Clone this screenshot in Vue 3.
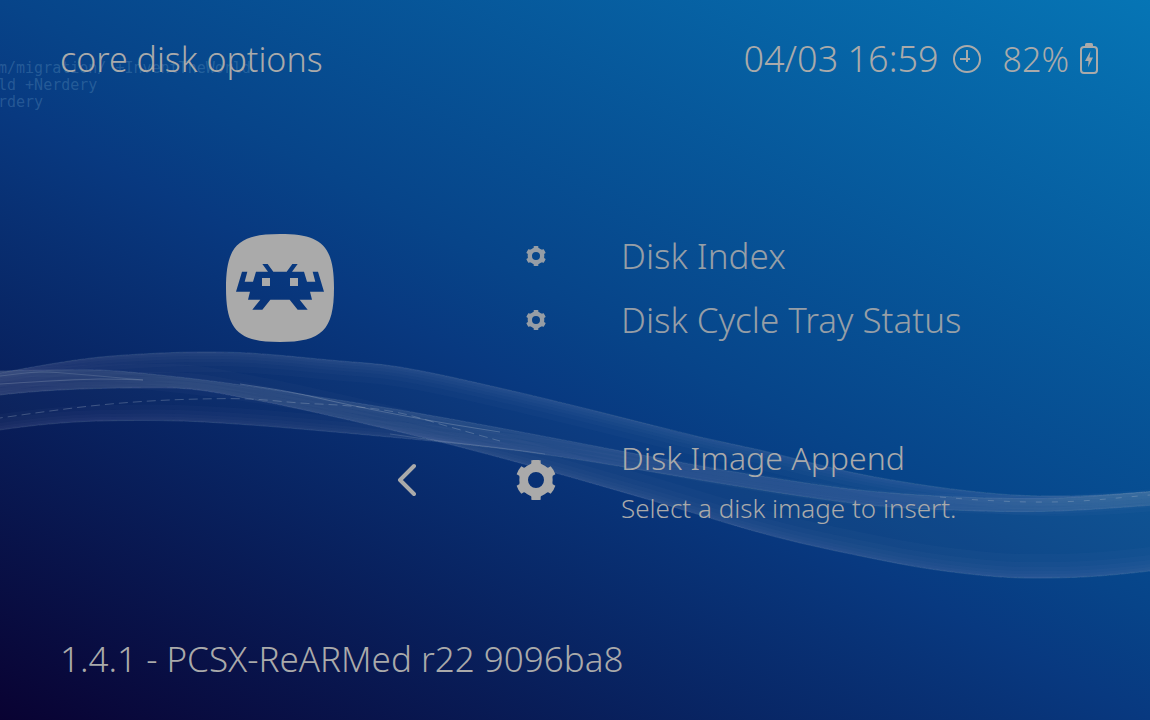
<script setup>
const items = ['Disk Index', 'Disk Cycle Tray Status']
const angles = [0, 60, 120, 180, 240, 300]

const crest = [[-20, 377], [0, 373], [50, 364], [100, 357], [160, 353], [200, 352], [250, 353], [330, 360], [400, 367], [500, 388], [600, 412], [700, 437], [760, 450], [850, 472], [930, 486], [1000, 494], [1050, 496], [1100, 495], [1170, 490]]
const middle = [[-20, 373], [0, 371], [50, 370], [100, 370], [150, 374], [220, 382], [300, 394], [400, 410], [500, 428], [600, 447], [700, 466], [760, 476], [850, 489], [920, 495], [990, 498], [1060, 498], [1170, 490]]
const fold = [[-20, 399], [0, 395], [60, 390], [130, 388], [190, 389], [250, 399], [300, 409], [400, 432], [460, 447], [520, 463], [570, 477], [650, 500], [700, 515], [750, 530], [800, 543], [870, 558], [930, 569], [1000, 577], [1050, 578], [1100, 576], [1170, 569]]
const thread = [[-20, 421], [0, 418], [50, 411], [100, 405], [150, 401], [200, 399], [250, 399], [300, 403], [350, 406], [400, 413], [450, 427], [500, 441]]
const trough = [[-20, 434], [0, 430], [50, 424], [100, 421], [180, 421], [250, 425], [300, 429], [400, 438], [460, 444], [520, 451], [600, 463], [700, 480], [800, 496], [880, 506], [980, 511], [1060, 511], [1170, 504]]
const upperStreak = [[0, 376], [40, 372], [75, 374], [110, 377], [143, 380]]
const lowerStreak = [[0, 384], [50, 381], [100, 379], [143, 380]]
const spark = [[240, 384], [290, 392], [350, 405], [400, 415], [450, 424], [500, 432]]
const knot = [[390, 434], [440, 441], [500, 448], [545, 454]]
const glint = [[940, 497], [980, 500], [1030, 502], [1080, 501], [1150, 495]]

function curve(points) {
  let d = ''
  for (let i = 0; i < points.length - 1; i++) {
    const a = points[Math.max(i - 1, 0)]
    const b = points[i]
    const c = points[i + 1]
    const e = points[Math.min(i + 2, points.length - 1)]
    const t = (c[0] - b[0]) / 3
    const s1 = (c[1] - a[1]) / (c[0] - a[0])
    const s2 = (e[1] - b[1]) / (e[0] - b[0])
    d += `C${b[0] + t} ${b[1] + t * s1} ${c[0] - t} ${c[1] - t * s2} ${c[0]} ${c[1]}`
  }
  return d
}
const line = (p) => `M${p[0][0]} ${p[0][1]}${curve(p)}`
function area(top, bottom) {
  const back = [...bottom].reverse()
  return `${line(top)}L${back[0][0]} ${back[0][1]}${curve(back)}Z`
}
const shift = (p, dy) => p.map(([x, y]) => [x, y + dy])
const veil = (p, steps) => steps.map((dy) => area(p, shift(p, dy)))

const veils = [
  ...veil(crest, [2, 4, 7, 10, 14, 20]),
  ...veil(middle, [3, 7, 11, 16]),
  ...veil(fold, [-2, -4, -7, -11, -16, -24]),
  ...veil(trough, [-2, -4, -7, -11, -16])
]
const sheets = [area(crest, middle), area(middle, fold), area(middle, fold), area(middle, trough)]
</script>

<template>
  <div class="screen">
    <svg class="ribbon" viewBox="0 0 1150 720" preserveAspectRatio="none" aria-hidden="true">
      <g fill="#aebccc">
        <path v-for="(d, i) in sheets" :key="'s' + i" :d="d" fill-opacity="0.03" />
        <path v-for="(d, i) in veils" :key="'v' + i" :d="d" fill-opacity="0.028" />
      </g>
      <g fill="none" stroke="#aebccc" stroke-width="1">
        <path :d="line(crest)" stroke-opacity="0.15" />
        <path :d="line(middle)" stroke-opacity="0.16" />
        <path :d="line(fold)" stroke-opacity="0.16" />
        <path :d="line(trough)" stroke-opacity="0.14" />
        <path :d="line(thread)" stroke-opacity="0.3" stroke-dasharray="9 5" />
        <path :d="line(upperStreak)" stroke-opacity="0.2" />
        <path :d="line(lowerStreak)" stroke-opacity="0.25" />
        <path :d="line(spark)" stroke-opacity="0.3" />
        <path :d="line(knot)" stroke-opacity="0.2" />
        <path :d="line(glint)" stroke-opacity="0.3" stroke-dasharray="6 10" />
      </g>
    </svg>
    <pre class="ghost" aria-hidden="true">m/migration/ +InventTheWorld
ld +Nerdery
rdery</pre>

    <header class="bar">
      <h1>core disk options</h1>
      <div class="status">
        <time>04/03 16:59</time>
        <svg class="clock" viewBox="0 0 28 28" fill="none" stroke="#aaa" stroke-width="2" aria-hidden="true">
          <circle cx="14" cy="14" r="13" />
          <path d="M14 5V17M7 14H17" />
        </svg>
        <span class="charge">82%</span>
        <svg class="battery" viewBox="0 0 18 31" aria-hidden="true">
          <path d="M5 3V1.500Q5 0 6.500 0H11.500Q13 0 13 1.500V3Z" fill="#aaa" />
          <rect x="1" y="4" width="16" height="26" rx="3" fill="none" stroke="#aaa" stroke-width="2" />
          <path d="M10.500 8L5 18H8.500L8 24.500L13 14.500H9.500Z" fill="#aaa" />
        </svg>
      </div>
    </header>

    <main class="menu">
      <svg class="logo" viewBox="48 42 324 324" role="img" aria-label="RetroArch">
        <path fill="#aaa" fill-rule="evenodd" d="M210 42C336 42 372 78 372 204S336 366 210 366S48 330 48 204S84 42 210 42ZM96 155H112L104 185H129L138 155H174L157 132H173L190 155H230L247 132H263L246 155H282L291 185H316L308 155H324L342 215H300L306 239H269L293 269H263L239 239H181L157 269H127L151 239H114L120 215H78ZM156 174V198H180V174ZM240 174V198H264V174Z" />
      </svg>
      <ul class="list">
        <li v-for="item in items" :key="item">
          <button class="item">
            <svg class="gear" viewBox="-60 -60 120 120" aria-hidden="true">
              <circle r="37" fill="none" stroke="#aaa" stroke-width="26" />
              <path v-for="a in angles" :key="a" d="M-14-59Q0-62 14-59V-50L20-42H-20L-14-50Z" :transform="`rotate(${a})`" fill="#aaa" />
            </svg>
            <span class="title">{{ item }}</span>
          </button>
        </li>
        <li class="current">
          <button class="back" aria-label="Back">
            <svg viewBox="0 0 20 34" fill="none" stroke="#aaa" stroke-width="4" stroke-linecap="round" stroke-linejoin="round" aria-hidden="true">
              <path d="M18 3L4 17L18 31" />
            </svg>
          </button>
          <button class="item active">
            <svg class="gear" viewBox="-60 -60 120 120" aria-hidden="true">
              <circle r="37" fill="none" stroke="#aaa" stroke-width="26" />
              <path v-for="a in angles" :key="a" d="M-14-59Q0-62 14-59V-50L20-42H-20L-14-50Z" :transform="`rotate(${a})`" fill="#aaa" />
            </svg>
            <span class="text">
              <span class="title">Disk Image Append</span>
              <span class="note">Select a disk image to insert.</span>
            </span>
          </button>
        </li>
      </ul>
    </main>

    <footer class="bar">1.4.1 - PCSX-ReARMed r22 9096ba8</footer>
  </div>
</template>

<style>
body {
  margin: 0;
}
</style>

<style scoped>
.screen {
  position: relative;
  display: flex;
  flex-direction: column;
  box-sizing: border-box;
  min-height: 100vh;
  padding: 34px 50px 36px 60px;
  overflow: hidden;
  color: #aaa;
  background: linear-gradient(28deg, #090232, #083980 46%, #074489 54%, #0675b5);
  font: 300 34px/50px "Noto Sans", "Open Sans", sans-serif;
}
.ribbon {
  position: absolute;
  inset: 0;
  width: 100%;
  height: 100%;
}
.ghost {
  position: absolute;
  top: 60px;
  left: -2px;
  margin: 0;
  color: rgba(110, 160, 200, 0.3);
  font: 15px/17px "DejaVu Sans Mono", monospace;
}
.bar {
  position: relative;
  display: flex;
  justify-content: space-between;
  align-items: center;
}
footer {
  font-size: 35px;
}
h1 {
  margin: 0;
  font: inherit;
}
.status {
  display: flex;
  align-items: center;
}
time {
  font-size: 36px;
}
.clock {
  width: 28px;
  height: 28px;
  margin: 0 22px 0 14px;
}
.battery {
  width: 18px;
  height: 31px;
  margin: 0 2px 2px 11px;
}
.menu {
  position: relative;
  display: flex;
  flex: 1;
  align-items: flex-start;
  padding: 140px 0 0 166px;
}
.logo {
  flex: none;
  width: 108px;
  height: 108px;
  margin-top: 10px;
}
.list {
  flex: 1;
  margin: 0 0 0 60px;
  padding: 0;
  list-style: none;
}
.list li {
  display: flex;
  align-items: center;
  padding-left: 122px;
}
.list .current {
  margin-top: 78px;
  padding-left: 2px;
}
button {
  padding: 0;
  border: 0;
  background: none;
  color: inherit;
  font: inherit;
  text-align: left;
}
.item {
  display: flex;
  flex: 1;
  align-items: center;
  gap: 75px;
  height: 64px;
  padding-left: 10px;
  font-size: 35px;
  opacity: 0.88;
}
.gear {
  flex: none;
  width: 20px;
  height: 20px;
}
.back {
  display: flex;
  margin-right: 100px;
}
.back svg {
  width: 20px;
  height: 34px;
}
.active {
  gap: 65px;
  height: 100px;
  padding-left: 0;
  font-size: 32px;
  opacity: 1;
}
.active .gear {
  width: 40px;
  height: 40px;
}
.text {
  display: flex;
  flex-direction: column;
  padding-top: 6px;
}
.note {
  font-size: 26px;
}
</style>
